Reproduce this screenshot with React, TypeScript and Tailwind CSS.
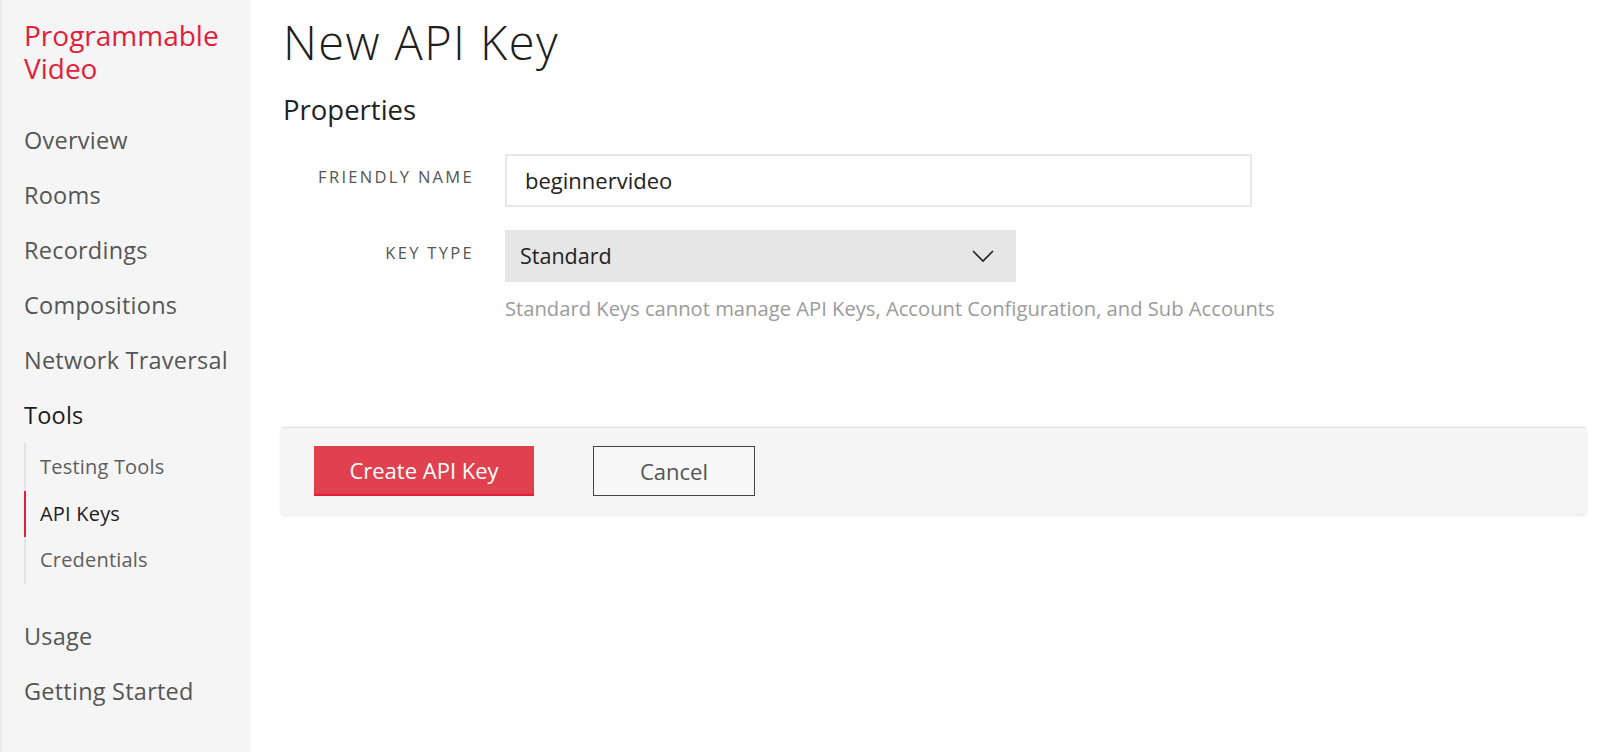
const NAV = ["Overview", "Rooms", "Recordings", "Compositions", "Network Traversal"];
const SUB = [
  { label: "Testing Tools", active: false },
  { label: "API Keys", active: true },
  { label: "Credentials", active: false },
];

function Sidebar() {
  return (
    <aside className="w-[251px] shrink-0 bg-[#f5f5f5] border-l-2 border-[#ebebeb] pl-[22px] pt-[19px]">
      <div className="text-[28px] leading-[33px] text-[#e31e3b]">
        Programmable
        <br />
        Video
      </div>
      <nav className="mt-[28px] flex flex-col">
        {NAV.map((n) => (
          <a key={n} className="h-[55px] flex items-center text-[23.5px] tracking-[0.01em] text-[#565656]">
            {n}
          </a>
        ))}
        <a className="h-[55px] flex items-center text-[23.5px] tracking-[0.01em] text-[#1c1c1c]">Tools</a>
        <div className="pt-[1px] border-l-2 border-[#e4e4e4] flex flex-col">
          {SUB.map((s) => (
            <a
              key={s.label}
              className={
                "-ml-[2px] h-[46.5px] flex items-center pl-[14px] text-[20px] tracking-[0.01em] border-l-2 " +
                (s.active ? "border-[#e31e3b] text-[#1c1c1c]" : "border-transparent text-[#5e5e5e]")
              }
            >
              {s.label}
            </a>
          ))}
        </div>
        <div className="h-[26px]" />
        <a className="h-[55px] flex items-center text-[23.5px] tracking-[0.01em] text-[#565656]">Usage</a>
        <a className="h-[55px] flex items-center text-[23.5px] tracking-[0.01em] text-[#565656]">Getting Started</a>
      </nav>
    </aside>
  );
}

function Field({ label, children }: { label: string; children: React.ReactNode }) {
  return (
    <div className="flex items-start">
      <div className="w-[222px] shrink-0 pr-[31px] pt-[11px] leading-[24px] text-right text-[16.5px] tracking-[0.14em] text-[#555]">
        {label}
      </div>
      <div className="flex-1">{children}</div>
    </div>
  );
}

export default function App() {
  return (
    <div
      className="flex w-[1600px] h-[752px] overflow-hidden bg-white"
      style={{ fontFamily: '"Open Sans", "Liberation Sans", sans-serif' }}
    >
      <Sidebar />
      <main className="flex-1 pl-[32px] pr-[14px]">
        <h1 className="mt-[14px] text-[47px] leading-[56px] tracking-[0.03em] font-light text-[#1e1e1e]">
          New API Key
        </h1>
        <h2 className="mt-[22px] text-[27.5px] leading-[36px] text-[#222]">Properties</h2>
        <div className="mt-[26px] flex flex-col gap-[23px]">
          <Field label="FRIENDLY NAME">
            <div className="w-[747px] h-[53px] border-2 border-[#e8e8e8] bg-white flex items-center pl-[18px] text-[22px] text-[#222]">
              beginnervideo
            </div>
          </Field>
          <Field label="KEY TYPE">
            <div className="w-[511px] h-[52px] bg-[#e6e6e6] flex items-center justify-between pl-[15px] pr-[22px] text-[21.5px] text-[#222]">
              Standard
              <svg width="22" height="13" viewBox="0 0 22 13" fill="none">
                <polyline points="1,1 11,11 21,1" stroke="#222" strokeWidth="1.6" />
              </svg>
            </div>
            <p className="mt-[13px] text-[20.2px] leading-[27px] text-[#9b9b9b]">
              Standard Keys cannot manage API Keys, Account Configuration, and Sub Accounts
            </p>
          </Field>
        </div>
        <div className="mt-[105px] -ml-[1px] h-[87px] bg-[#f5f5f5] border-t border-[#e2e2e2] rounded-br-[3px] shadow-[0_1px_4px_rgba(0,0,0,0.12)] flex items-center pl-[32px] gap-[59px]">
          <button className="w-[220px] h-[50px] bg-[#e0414f] border-b-2 border-[#e31e3b] text-white text-[22px]">
            Create API Key
          </button>
          <button className="w-[162px] h-[50px] border border-[#444] bg-[#f7f7f7] text-[#555] text-[22px]">
            Cancel
          </button>
        </div>
      </main>
    </div>
  );
}
